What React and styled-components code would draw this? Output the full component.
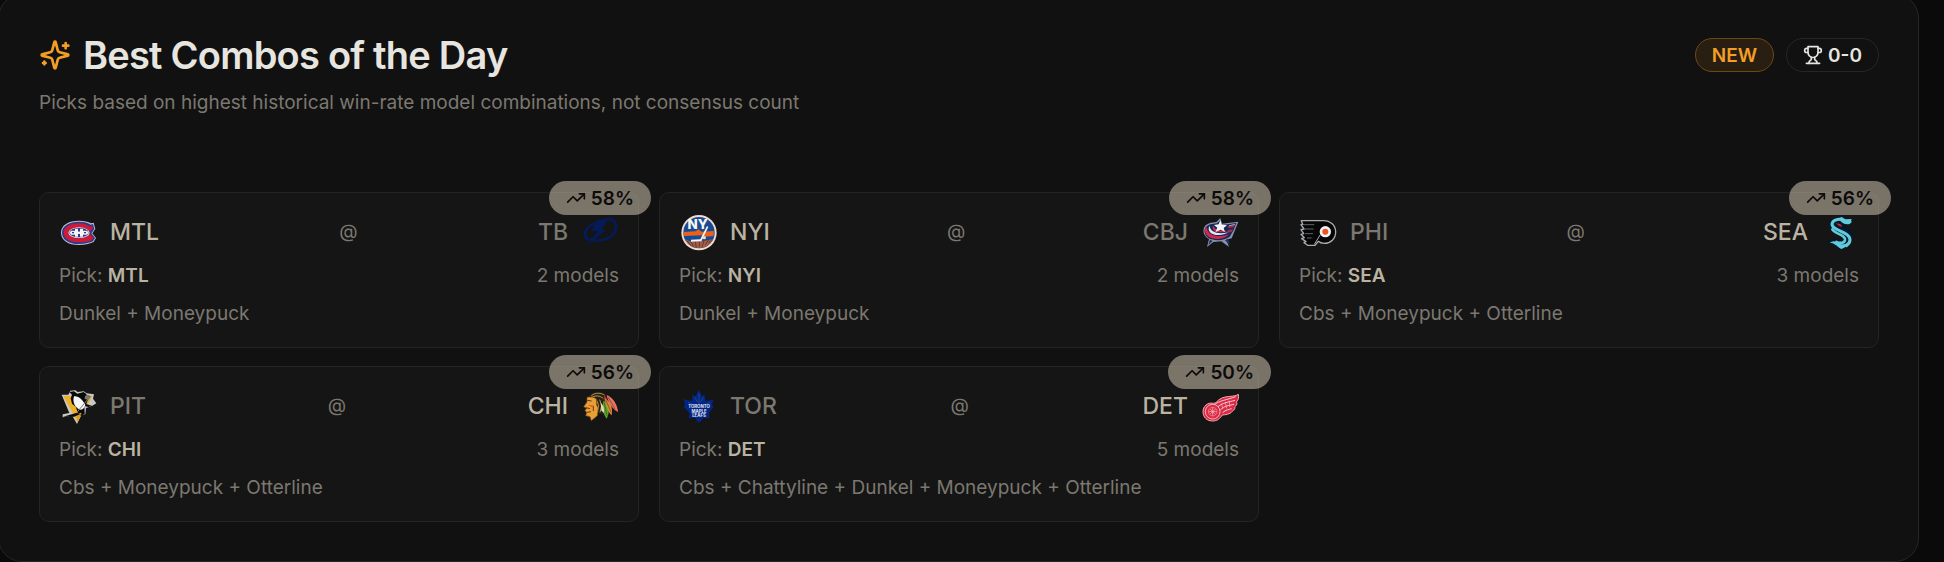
import React from "react";
import styled, { createGlobalStyle } from "styled-components";
import { TrendingUp } from "lucide-react";

const GlobalStyle = createGlobalStyle`
  * {
    box-sizing: border-box;
  }

  body {
    margin: 0;
    background-color: #0a0a0a;
    color: #e7e5e0;
    font-family: Inter, "Liberation Sans", sans-serif;
    overflow: hidden;
  }
`;

const Page = styled.main`
  padding-right: 25px;
  overflow: hidden;
`;

const Panel = styled.section`
  margin: -6px 0 0 -2px;
  padding: 40px 39px 39px 40px;
  border: 1px solid #262626;
  border-radius: 24px;
  background-color: #111111;
`;

const Header = styled.header`
  display: flex;
  justify-content: space-between;
  align-items: flex-start;
  margin-bottom: 75px;
`;

const Title = styled.h2`
  display: flex;
  align-items: center;
  gap: 12px;
  margin: 0 0 14px;
  font-size: 38px;
  font-weight: 600;
  line-height: 40px;
  letter-spacing: -0.02em;
`;

const Subtitle = styled.p`
  margin: 0;
  font-size: 19px;
  line-height: 28px;
  color: #7c7870;
`;

const Pills = styled.div`
  display: flex;
  gap: 12px;
  padding-top: 3px;
`;

const Pill = styled.span`
  display: inline-flex;
  align-items: center;
  gap: 5px;
  height: 34px;
  padding: 0 16px;
  border: 1px solid ${(props) => (props.$accent ? "#70480f" : "#262626")};
  border-radius: 17px;
  background-color: ${(props) => (props.$accent ? "#281f12" : "transparent")};
  color: ${(props) => (props.$accent ? "#f59e24" : "#e7e5e0")};
  font-size: 19px;
  font-weight: 600;
`;

const Grid = styled.div`
  display: grid;
  grid-template-columns: repeat(3, 1fr);
  gap: 18px 20px;
`;

const Card = styled.article`
  position: relative;
  display: flex;
  flex-direction: column;
  gap: 10px;
  padding: 19px;
  border: 1px solid #242424;
  border-radius: 10px;
  background-color: #151515;
`;

const RateBadge = styled(Pill)`
  position: absolute;
  top: -12px;
  right: -13px;
  border-color: transparent;
  background-color: rgba(190, 180, 162, 0.6);
  color: #0c0b0a;
`;

const Row = styled.div`
  display: flex;
  justify-content: space-between;
  align-items: center;
  font-size: 19px;
  line-height: 28px;
  color: #7c7870;
`;

const Team = styled.div`
  display: flex;
  flex-direction: ${(props) => (props.$home ? "row-reverse" : "row")};
  align-items: center;
  gap: 11px;
  height: 40px;
  font-size: 23px;
  font-weight: 500;
  color: ${(props) => (props.$picked ? "#bbb3a1" : "#7c7870")};
`;

const Pick = styled.strong`
  font-weight: 600;
  color: #bbb3a1;
`;

const Models = styled.p`
  margin: 0;
  font-size: 19px;
  line-height: 28px;
  color: #7c7870;
`;

const Stroke = styled.svg`
  flex: none;
  fill: none;
  stroke: currentColor;
  stroke-width: 2;
  stroke-linecap: round;
  stroke-linejoin: round;
`;

const SparkleStroke = styled(Stroke)`
  color: #f59e24;
`;

const LogoSvg = styled.svg`
  flex: none;
  width: 40px;
  height: 40px;
`;

function SparklesIcon() {
  return (
    <SparkleStroke width="32" height="32" viewBox="0 0 24 24">
      <path d="M9.937 15.5A2 2 0 0 0 8.5 14.063l-6.135-1.582a.5.5 0 0 1 0-.962L8.5 9.936A2 2 0 0 0 9.937 8.5l1.582-6.135a.5.5 0 0 1 .963 0L14.063 8.5A2 2 0 0 0 15.5 9.937l6.135 1.581a.5.5 0 0 1 0 .964L15.5 14.063a2 2 0 0 0-1.437 1.437l-1.582 6.135a.5.5 0 0 1-.963 0z" />
      <path d="M20 3v4M22 5h-4M4 17v2M5 18H3" />
    </SparkleStroke>
  );
}

function TrophyIcon() {
  return (
    <Stroke width="20" height="20" viewBox="0 0 24 24">
      <path d="M6 9H4.5a2.5 2.5 0 0 1 0-5H6M18 9h1.5a2.5 2.5 0 0 0 0-5H18M4 22h16" />
      <path d="M10 14.66V17c0 .55-.47.98-.97 1.21C7.85 18.75 7 20.24 7 22M14 14.66V17c0 .55.47.98.97 1.21C16.15 18.75 17 20.24 17 22" />
      <path d="M18 2H6v7a6 6 0 0 0 12 0V2Z" />
    </Stroke>
  );
}

// Team marks, all drawn on a 120 x 120 canvas
const logos = {
  MTL: (
    <>
      <path
        d="M60 26C28 26 6 39 6 62s22 37 53 37c21 0 36-5 45-9l7-12-11-14 9-13-5-19-8 2c-8-5-20-8-36-8z"
        fill="#b9bdd2"
      />
      <path
        d="M60 29C31 29 9 41 9 62s21 34 50 34c20 0 34-4 43-8l6-10-11-14 9-13-4-15-7 2c-8-6-20-9-35-9z"
        fill="#2c3a86"
      />
      <path
        d="M60 34C35 34 14 44 14 62s20 29 46 29c18 0 31-3 39-7l4-6-9-11h-8c-8 12-54 11-54-5s46-17 54-5h8l8-8-3-8-7 3c-8-6-18-10-32-10z"
        fill="#cb1b3c"
      />
      <ellipse cx="60" cy="62" rx="32" ry="16" fill="#e3e4ee" />
      <ellipse cx="60" cy="62" rx="29" ry="14" fill="#2c3a86" />
      <path
        d="M36 56h12v3h22v-3h14l5 6-5 6H70v-3H48v3H36l-4-6z"
        fill="#eeeef4"
      />
      <path d="M48 50h9v9h6v-9h9v24h-9v-9h-6v9h-9z" fill="#f4f4f8" />
      <path d="M57 51h6v6h-6zM57 67h6v6h-6zM39 60h6v4h-6zM75 60h6v4h-6z" fill="#2c3a86" />
    </>
  ),
  TB: (
    <>
      <path
        d="M78 17c22-1 38 8 38 26 0 28-28 46-57 46-13 0-22-2-29-6l5-6c7 3 15 4 24 4 25 0 48-15 48-37 0-13-12-19-31-19z"
        fill="#051b58"
      />
      <path
        d="M59 27C31 33 12 51 14 70c1 9 6 15 14 18l4-8c-6-3-9-7-9-13 0-14 14-26 32-31z"
        fill="#051b58"
      />
      <path
        d="M111 13 56 25 36 58h21L17 106l65-52H66l20-26h-9z"
        fill="#051b58"
      />
    </>
  ),
  NYI: (
    <>
      <circle cx="60" cy="62" r="53" fill="#f0dcd0" />
      <circle cx="60" cy="62" r="47" fill="#164a91" />
      <path d="M14 60 50 58l8-6 10 7 36-2c1 6 1 10-1 15l-25 2-8-4-54 2c-3-3-3-8-2-12z" fill="#e9611f" />
      <path d="M18 82c8 3 16 8 24 7l36-3 24-5c-6 15-22 27-42 27S25 98 18 82z" fill="#b65a31" />
      <path d="M24 86l12 14M36 89l8 15M49 89l3 18M62 88l-2 18M75 86l-6 18M88 84l-9 15M98 82l-9 11" stroke="#42415e" strokeWidth="3" />
      <text x="56" y="52" textAnchor="middle" fontSize="40" fontWeight="800" fill="#f7f5f2">
        NY
      </text>
      <path d="M84 42 64 82l-28 1v6l31-1 21-43z" fill="#f7f5f2" />
      <circle cx="76" cy="77" r="5" fill="#f2d9cc" />
    </>
  ),
  CBJ: (
    <>
      <path
        d="M64 18l5 17 49-6-11 28-9 22-16 4 8 22-23-17-24 2-19 15 6-24C14 73 10 57 16 45c6-10 22-14 36-15z"
        fill="#8890a5"
      />
      <path
        d="M64 25l6 14 42-6-8 21-12 20c-16 12-46 14-64 4C16 69 14 55 20 46c7-8 20-11 34-12z"
        fill="#15285b"
      />
      <path d="M33 83l-5 16 13-12zM78 85l15 15-5-19z" fill="#1d3266" />
      <path d="M22 43C8 63 31 86 63 80c12-2 23-7 27-14-18 8-44 9-56-1-8-6-10-14-12-22z" fill="#d02849" />
      <path d="M31 41c-7 16 5 29 29 28 12 0 23-4 28-8-18 4-36 4-46-3-6-4-9-9-11-17z" fill="#e8e4ea" />
      <path d="M42 41c-4 12 6 20 22 20 10 0 17-2 22-4-17 1-30-1-37-7z" fill="#d02849" />
      <path d="M64 24l5 14 15 2-10 8 4 12-13-7-16 7 6-13-10-8 14-2z" fill="#f5f4f5" />
      <path d="M86 43l23-5-5 8-16 3zM86 54l16-2-4 8-13 2z" fill="#a22c4a" />
      <path d="M90 40l19-4-3 3-15 3z" fill="#c9cad6" />
    </>
  ),
  PHI: (
    <>
      <path
        d="M7 26h66c21 0 37 14 37 34S95 94 76 94c-8 0-14-2-18-6l-10 12H26l-11-8 6-3-13-9 8-3L6 67l8-2L6 53l9-2L6 38l5-1z"
        fill="#060606"
        stroke="#a9acaf"
        strokeWidth="4"
        strokeLinejoin="round"
      />
      <path d="M12 38h34M16 51h28M18 65h24M24 78h14" stroke="#8f9295" strokeWidth="2" />
      <path d="M46 97 64 68" stroke="#a9acaf" strokeWidth="3" />
      <circle cx="79" cy="59" r="17" fill="#f1f2f2" />
      <circle cx="79" cy="59" r="9" fill="#ef5223" />
    </>
  ),
  SEA: (
    <>
      <path
        d="M73 13 43 23C23 31 28 52 48 61c15 8 29 12 22 23-4 6-13 2-23-1l-20 5c19 4 25 16 39 24 17-8 35-25 34-44-1-14-14-19-28-24-12-5-17-8-14-13 6 8 15 10 26 7l18-14-23-2z"
        fill="#04182d"
        stroke="#04182d"
        strokeWidth="5"
        strokeLinejoin="round"
      />
      <g fill="none" stroke="#62cbd9" strokeLinecap="round">
        <path d="M60 22C40 24 34 36 44 46c10 11 49 16 49 37 0 8-4 13-11 18" strokeWidth="9" />
        <path d="M40 52c8 14 40 16 38 32-2 11-16 10-26 6" strokeWidth="8" />
      </g>
      <path d="M54 20l14-5 11 7 19-1-2 6 3 2-7 7c-12 3-20-1-27-8z" fill="#62cbd9" />
      <path d="M32 92c8-6 16-6 24 0 9 6 18 7 30 0l6 1c-6 9-15 14-25 18-12-6-18-18-35-19z" fill="#62cbd9" />
      <path d="M50 34l14 2 6 8-8-1z" fill="#d5223b" />
    </>
  ),
  PIT: (
    <>
      <path
        d="M8 26h20l6-12 15-1 7 5 18-2 9 6 22 3-3 13 10 14-13 8-18 6-2 19-13 2-12 27-14-24-29 4v-9l20-4z"
        fill="#c9c9c4"
      />
      <path d="M13 30h24l32 54-13 25z" fill="#eeb025" />
      <path d="M76 29l24 1-15 26z" fill="#e2a928" />
      <path d="M31 18l14-2 10 7 19-5 8 6 5 16-5 14 18 6-12 3-12-3 1 24-13 5-7-8-7-19-11-9-4-16 4-11z" fill="#090909" />
      <path d="M45 31c14-2 25 9 34 26-3 10-9 15-17 14-13-5-23-23-17-40z" fill="#f6f6f5" />
      <path d="M51 83l17-3-12 26z" fill="#d69d29" />
      <path d="M12 92l42-12 10 4-18 8z" fill="#0b0b0b" />
      <path d="M54 79l37-45" stroke="#777974" strokeWidth="3" />
      <path d="M87 26l9 5-8 11-11-3 1-9z" fill="#747670" />
    </>
  ),
  CHI: (
    <>
      <path d="M31 29c8-12 32-17 49-4l6 16-11 44-18-4-6-25-24-7z" fill="#282015" />
      <path d="M37 29c12-10 30-9 40-1M34 36c14-9 30-8 39 2M54 44l5 15-4 20M62 41l6 18-5 20" fill="none" stroke="#b29a4c" strokeWidth="3" />
      <path
        d="M24 34c10-2 21-1 28 5l1 18 5 9-3 23-18 15-4-12-13-3 3-9-5-7 5-6-9-5 10-14z"
        fill="#e7a132"
        stroke="#7f431e"
        strokeWidth="2"
      />
      <path d="M25 43l13 2M21 65l12 3M24 79l12-2M43 60v15" stroke="#6b371b" strokeWidth="3" />
      <path d="M26 56l18 2-2 8z" fill="#ec5b39" />
      <path d="M75 30c11 4 14 25 12 50l-6-2z" fill="#cc3a42" />
      <path d="M74 44c18 15 19 34 9 54-12-16-15-34-9-54z" fill="#5da32b" />
      <path d="M78 38c17 8 24 28 20 50-11-10-17-28-20-50z" fill="#e78630" />
      <path d="M83 27c18 6 32 27 34 51-18-9-30-29-34-51z" fill="#ee705e" />
      <path d="M76 51l8 39M81 43l16 37M87 33l21 36" stroke="#31562b" strokeWidth="2" />
      <path d="M65 50c8 7 12 18 9 31l-7-8z" fill="#dde1b9" />
    </>
  ),
  TOR: (
    <>
      <path
        d="M60 12l9 19 8-6 2 20 25-4-5 15 4 7-13 19 2 15-19-2-10 14h-6l-9-14-19 2 3-15-18-20 4-8-5-14 26 5 2-20 8 6z"
        fill="#032582"
      />
      <path d="M60 21v34M48 34l7 14M73 34l-8 14M27 49l18 8M94 49l-18 8" stroke="#345196" strokeWidth="2" />
      <text x="60" y="67" textAnchor="middle" fontSize="13" fontWeight="700" fill="#e4e9f5">
        TORONTO
      </text>
      <text x="60" y="80" textAnchor="middle" fontSize="13" fontWeight="700" fill="#e4e9f5">
        MAPLE
      </text>
      <text x="60" y="93" textAnchor="middle" fontSize="13" fontWeight="700" fill="#e4e9f5">
        LEAFS
      </text>
    </>
  ),
  DET: (
    <>
      <path
        d="M118 25c-12 9-38 3-55 14-8 5-10 12-19 13C25 48 12 61 12 77c0 17 12 28 29 28 14 0 22-8 29-18 16-1 27-5 30-12 8-4 9-10 7-12 8-6 8-13 5-15 7-7 8-15 6-23z"
        fill="#dc2946"
        stroke="#f2aab0"
        strokeWidth="3"
      />
      <circle cx="41" cy="77" r="22" fill="none" stroke="#f4b5bb" strokeWidth="3" />
      <circle cx="41" cy="77" r="13" fill="none" stroke="#f0959f" strokeWidth="2" />
      <path d="M41 65v24M29 77h24M33 69l16 16M49 69 33 85" stroke="#f4c5c9" strokeWidth="2" />
      <path
        d="M48 55c11-10 34-13 62-23M57 62c15-13 31-13 51-19M64 72c12-13 24-13 41-17M71 80c10-9 18-9 27-12"
        fill="none"
        stroke="#f6ccd0"
        strokeWidth="3"
      />
      <path d="M67 53l5 15M79 48l4 19M91 44l1 19" stroke="#f3bbc1" strokeWidth="2" />
    </>
  ),
};

const combos = [
  { away: "MTL", home: "TB", pick: "MTL", rate: 58, models: ["Dunkel", "Moneypuck"] },
  { away: "NYI", home: "CBJ", pick: "NYI", rate: 58, models: ["Dunkel", "Moneypuck"] },
  { away: "PHI", home: "SEA", pick: "SEA", rate: 56, models: ["Cbs", "Moneypuck", "Otterline"] },
  { away: "PIT", home: "CHI", pick: "CHI", rate: 56, models: ["Cbs", "Moneypuck", "Otterline"] },
  {
    away: "TOR",
    home: "DET",
    pick: "DET",
    rate: 50,
    models: ["Cbs", "Chattyline", "Dunkel", "Moneypuck", "Otterline"],
  },
];

function TeamLabel({ code, home, picked }) {
  return (
    <Team $home={home} $picked={picked}>
      <LogoSvg viewBox="0 0 120 120" aria-hidden="true">
        {logos[code]}
      </LogoSvg>
      <span>{code}</span>
    </Team>
  );
}

function ComboCard({ combo }) {
  const { away, home, pick, rate, models } = combo;

  return (
    <Card>
      <Row>
        <TeamLabel code={away} picked={pick === away} />
        <span>@</span>
        <TeamLabel code={home} home picked={pick === home} />
      </Row>
      <Row>
        <span>
          Pick: <Pick>{pick}</Pick>
        </span>
        <span>{models.length} models</span>
      </Row>
      <Models>{models.join(" + ")}</Models>
      <RateBadge>
        <TrendingUp size={20} />
        {rate}%
      </RateBadge>
    </Card>
  );
}

function App() {
  return (
    <Page>
      <GlobalStyle />
      <Panel>
        <Header>
          <div>
            <Title>
              <SparklesIcon />
              Best Combos of the Day
            </Title>
            <Subtitle>
              Picks based on highest historical win-rate model combinations, not
              consensus count
            </Subtitle>
          </div>
          <Pills>
            <Pill $accent>NEW</Pill>
            <Pill>
              <TrophyIcon />
              0-0
            </Pill>
          </Pills>
        </Header>
        <Grid>
          {combos.map((combo) => (
            <ComboCard key={combo.away} combo={combo} />
          ))}
        </Grid>
      </Panel>
    </Page>
  );
}

export default App;
